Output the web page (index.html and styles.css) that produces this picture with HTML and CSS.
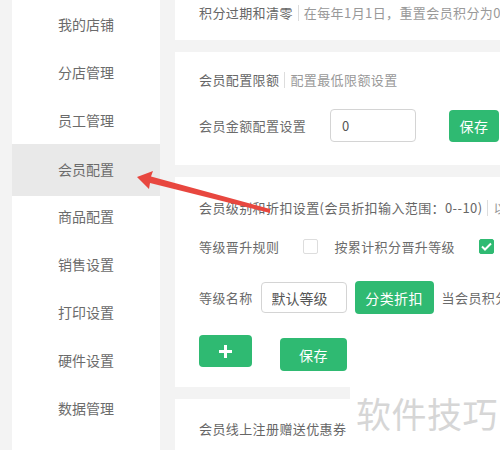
FILE: index.html
```html
<!DOCTYPE html>
<html lang="zh-CN">
<head>
  <meta charset="UTF-8">
  <meta name="viewport" content="width=device-width, initial-scale=1">
  <title>会员配置</title>
  <link rel="stylesheet" href="styles.css">
</head>
<body>
  <div class="page">
    <!-- left menu -->
    <ul class="sidebar">
      <li>我的店铺</li>
      <li>分店管理</li>
      <li>员工管理</li>
      <li class="active">会员配置</li>
      <li>商品配置</li>
      <li>销售设置</li>
      <li>打印设置</li>
      <li>硬件设置</li>
      <li>数据管理</li>
      <li>系统设置</li>
    </ul>

    <div class="main">
      <div class="card card-top">
        <div class="title">积分过期和清零<span class="sep"></span><span class="sub">在每年1月1日，重置会员积分为0</span></div>
      </div>

      <div class="card card-limit">
        <div class="title">会员配置限额<span class="sep"></span><span class="sub">配置最低限额设置</span></div>
        <div class="row">
          <span class="label label-wide">会员金额配置设置</span>
          <input class="field field-amount" type="text" value="0">
          <button class="btn btn-save-small">保存</button>
        </div>
      </div>

      <div class="card card-level">
        <div class="title">会员级别和折扣设置(会员折扣输入范围：0--10)<span class="sep"></span><span class="sub">以</span></div>
        <div class="row row-rule">
          <span class="label">等级晋升规则</span>
          <span class="check"></span>
          <span class="label">按累计积分晋升等级</span>
          <span class="check checked">
            <svg width="11" height="9" viewBox="0 0 11 9"><path d="M1 4.5 L4 7.5 L10 1.5" fill="none" stroke="#fff" stroke-width="2"/></svg>
          </span>
        </div>
        <div class="row row-name">
          <span class="label">等级名称</span>
          <input class="field field-name" type="text" value="默认等级">
          <button class="btn btn-cat">分类折扣</button>
          <span class="label">当会员积分达到</span>
        </div>
        <div class="row row-actions">
          <button class="btn btn-add">
            <svg width="13" height="13" viewBox="0 0 13 13"><rect x="5" y="0" width="3" height="13" fill="#fff"/><rect x="0" y="5" width="13" height="3" fill="#fff"/></svg>
          </button>
          <button class="btn btn-save">保存</button>
        </div>
      </div>

      <div class="card card-coupon">
        <div class="title">会员线上注册赠送优惠券</div>
      </div>
    </div>

    <!-- annotation arrow drawn over the screenshot -->
    <svg class="arrow" width="500" height="450" viewBox="0 0 500 450">
      <polygon points="137,177 153,171 151,176.5 270,209 270,213 150,183 149,189" fill="#e8473f"/>
    </svg>

    <div class="watermark">软件技巧</div>
  </div>
</body>
</html>
```

FILE: styles.css
```css
body {
  margin: 0;
  font-family: "Noto Sans CJK SC", "Noto Sans", sans-serif;
  background: #f3f3f3;
  color: #666;
  overflow: hidden;
}
.page {
  position: relative;
  display: flex;
  width: 500px;
  height: 450px;
  padding-left: 12px;
  box-sizing: border-box;
  overflow: hidden;
}

/* left menu */
.sidebar {
  list-style: none;
  margin: 0;
  padding: 0;
  width: 148px;
  flex-shrink: 0;
  background: #fff;
}
.sidebar li {
  height: 48px;
  line-height: 48px;
  text-align: center;
  font-size: 14px;
  color: #6b6b6b;
}
.sidebar li.active {
  background: #e9e9e9;
  height: 52px;
  line-height: 50px;
  margin-bottom: -4px;
}

/* content */
.main {
  flex: 1;
  margin-left: 15px;
  display: flex;
  flex-direction: column;
  gap: 12px;
  min-width: 0;
}
.card {
  background: #fff;
  padding: 0 24px;
  width: 400px;
  flex-shrink: 0;
  font-size: 13px;
  letter-spacing: 0.4px;
}
.title {
  line-height: 20px;
  white-space: nowrap;
  display: flex;
  align-items: center;
}
.sep {
  display: inline-block;
  width: 1px;
  height: 16px;
  background: #ddd;
  margin: 0 5px;
}
.sub {
  color: #999;
}
.card-top {
  padding-top: 3px;
  height: 37px;
}
.card-limit {
  padding-top: 18px;
  padding-bottom: 23px;
}
.card-level {
  padding-top: 21px;
  padding-bottom: 16px;
}
.card-coupon {
  padding-top: 20px;
  height: 60px;
}

.row {
  display: flex;
  align-items: center;
  white-space: nowrap;
}
.label {
  color: #6b6b6b;
}
.label-wide {
  width: 131px;
}
.field {
  box-sizing: border-box;
  border: 1px solid #d4d4d4;
  border-radius: 4px;
  font-family: inherit;
  font-size: 13px;
  color: #555;
  background: #fff;
  outline: none;
}
.btn {
  border: none;
  border-radius: 4px;
  background: #2fba72;
  color: #fff;
  font-family: inherit;
  font-size: 14px;
  letter-spacing: 0.4px;
  padding: 0;
  display: flex;
  align-items: center;
  justify-content: center;
}

.card-limit .row {
  margin-top: 19px;
}
.field-amount {
  width: 86px;
  height: 33px;
  padding: 0 11px;
}
.btn-save-small {
  margin-left: 33px;
  width: 50px;
  height: 32px;
}

.row-rule {
  margin-top: 18px;
  height: 20px;
}
.check {
  width: 15px;
  height: 15px;
  box-sizing: border-box;
  border: 1px solid #ddd;
  border-radius: 2px;
  background: #fff;
  margin: 0 16px 0 24px;
  display: flex;
  align-items: center;
  justify-content: center;
}
.check.checked {
  background: #2fba72;
  border-color: #2fba72;
  margin-left: 24px;
}

.row-name {
  margin-top: 25px;
  height: 33px;
}
.field-name {
  width: 86px;
  height: 31px;
  margin-left: 8px;
  padding: 0 10px;
  font-size: 14px;
}
.btn-cat {
  width: 79px;
  height: 33px;
  margin-left: 8px;
  margin-right: 8px;
}

.row-actions {
  margin-top: 21px;
  align-items: flex-start;
  height: 36px;
}
.btn-add {
  width: 53px;
  height: 32px;
}
.btn-save {
  width: 67px;
  height: 33px;
  margin-left: 28px;
  margin-top: 3px;
}

/* overlays */
.arrow {
  position: absolute;
  left: 0;
  top: 0;
  pointer-events: none;
}
.watermark {
  position: absolute;
  right: 0;
  bottom: 0;
  width: 150px;
  height: 75px;
  background: #fff;
  color: #d6d6d6;
  font-size: 35px;
  line-height: 35px;
  padding: 20px 0 0 6px;
  box-sizing: border-box;
  letter-spacing: 0.5px;
  white-space: nowrap;
}
```
